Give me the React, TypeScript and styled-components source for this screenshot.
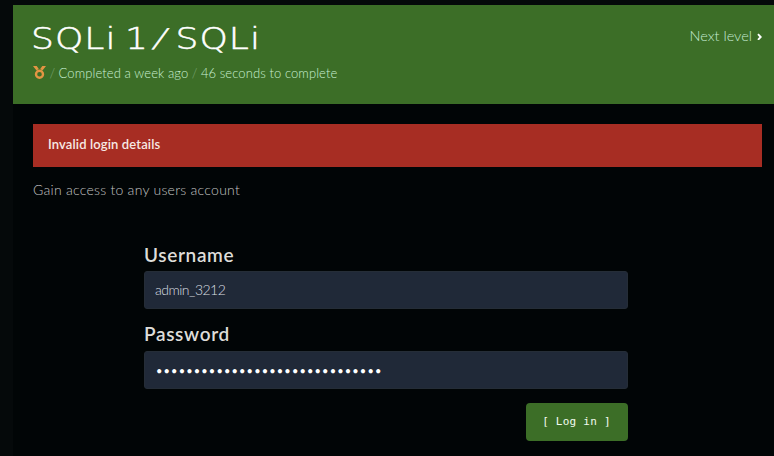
import React from "react";
import styled, { createGlobalStyle } from "styled-components";

const GlobalStyle = createGlobalStyle`
  * { box-sizing: border-box; }
  body {
    margin: 0;
    background: #05090a;
    font-family: Lato, sans-serif;
    overflow: hidden;
  }
`;

const Page = styled.div`
  height: 456px;
  padding: 5px 0 0 13px;
`;

const Panel = styled.div`
  height: 451px;
  background: #010506;
`;

const Header = styled.header`
  display: flex;
  justify-content: space-between;
  height: 99px;
  padding: 15px 12px 0 20px;
  background: #3c6e27;
`;

const Title = styled.h1`
  margin: 0 0 0 -2px;
  width: max-content;
  height: 38px;
  font: 200 30px/38px "DejaVu Sans", sans-serif;
  letter-spacing: 0.9px;
  word-spacing: -3.4px;
  white-space: pre;
  color: #fff;
  -webkit-text-stroke: 0.5px #fff;
  transform: scaleX(1.2);
  transform-origin: 0 0;
`;

const TitleSlash = styled.span`
  display: inline-block;
  margin: 0 -2px 0 -1px;
  transform: translate(-1px, -1px) skewX(-14deg) scaleY(0.86);
`;

const Meta = styled.div`
  display: flex;
  align-items: center;
  height: 18px;
  margin-top: 6px;
  font-size: 13px;
  font-weight: 300;
  line-height: 18px;
  letter-spacing: 0.09px;
  color: #c8eed2;
`;

const Slash = styled.span`
  width: 12.6px;
  text-align: center;
  color: #7fa677;
`;

const NextLink = styled.a`
  display: flex;
  align-items: center;
  gap: 5px;
  height: 20px;
  margin-top: 6px;
  font-size: 14.5px;
  font-weight: 300;
  line-height: 20px;
  color: #c4ead2;
`;

const Content = styled.main`
  padding: 20px 12px 0 20px;
`;

const Alert = styled.div`
  height: 43px;
  padding-left: 15px;
  background: #a72d23;
  color: #f7e9e5;
  font-size: 13px;
  font-weight: 600;
  line-height: 41px;
  letter-spacing: 0.13px;
`;

const Intro = styled.p`
  margin: 13px 0 0;
  font-size: 14px;
  font-weight: 300;
  line-height: 20px;
  letter-spacing: 0.26px;
  color: #c4c4c4;
`;

const Form = styled.form`
  display: flex;
  flex-direction: column;
  width: 484px;
  margin: 44px 0 0 111px;
`;

const Label = styled.label<{ $raised?: boolean }>`
  height: 27px;
  font-size: 19px;
  font-weight: 600;
  line-height: ${(p) => (p.$raised ? 19 : 21)}px;
  letter-spacing: 0.65px;
  color: #deddd9;
`;

const Input = styled.input<{ $secret?: boolean }>`
  display: block;
  width: 100%;
  height: 38px;
  margin-bottom: ${(p) => (p.$secret ? 14 : 15)}px;
  padding: ${(p) => (p.$secret ? "1px 10px 0 11px" : "0 10px 1px")};
  border: 1px solid #252d37;
  border-radius: 3px;
  outline: none;
  background: #202938;
  color: ${(p) => (p.$secret ? "#fff" : "#dadfe2")};
  font: ${(p) => (p.$secret ? "400 11px" : "300 14px")} Lato, sans-serif;
  letter-spacing: ${(p) => (p.$secret ? "1.17px" : "-0.5px")};
`;

const LoginButton = styled.button`
  align-self: flex-end;
  width: 102px;
  height: 38px;
  padding: 0 1px 2px 0;
  border: 0;
  border-radius: 4px;
  background: #3c6e27;
  color: #f2fbef;
  font: 400 11px "DejaVu Sans Mono", monospace;
  letter-spacing: 0.25px;
`;

const Medal = () => (
  <svg width="13" height="14" viewBox="0 0 13 14" fill="none">
    <path d="M0 0h3.7l2.1 3.1-2.3 1.5zM13 0H9.3L7.2 3.1l2.3 1.5z" fill="#e39543" />
    <circle cx="6.5" cy="8.2" r="3.5" stroke="#e39543" strokeWidth="2.4" />
  </svg>
);

const Chevron = () => (
  <svg width="5" height="8" viewBox="0 0 5 8" fill="none">
    <path d="M1 2.2 3.7 5 1 7.8" stroke="#fff" strokeWidth="1.9" />
  </svg>
);

export default function App() {
  return (
    <Page>
      <GlobalStyle />
      <Panel>
        <Header>
          <div>
            <Title>SQLi 1 <TitleSlash>/</TitleSlash> SQLi</Title>
            <Meta>
              <Medal />
              <Slash>/</Slash>
              <span>Completed a week ago</span>
              <Slash>/</Slash>
              <span>46 seconds to complete</span>
            </Meta>
          </div>
          <NextLink>
            <span>Next level</span>
            <Chevron />
          </NextLink>
        </Header>
        <Content>
          <Alert>Invalid login details</Alert>
          <Intro>Gain access to any users account</Intro>
          <Form>
            <Label htmlFor="username">Username</Label>
            <Input id="username" defaultValue="admin_3212" spellCheck={false} />
            <Label htmlFor="password" $raised>Password</Label>
            <Input id="password" type="password" $secret defaultValue={"x".repeat(30)} />
            <LoginButton type="button">[ Log in ]</LoginButton>
          </Form>
        </Content>
      </Panel>
    </Page>
  );
}
